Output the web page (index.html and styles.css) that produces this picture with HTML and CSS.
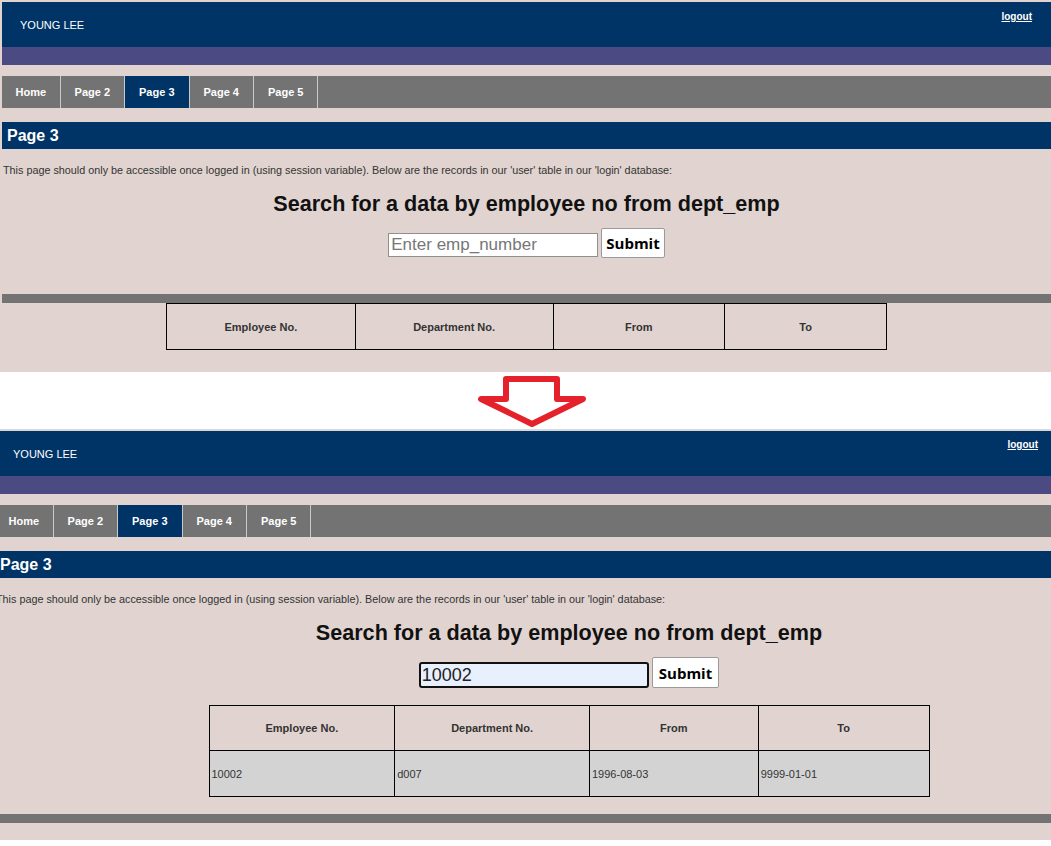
FILE: index.html
```html
<!DOCTYPE html>
<html lang="en">
<head>
<meta charset="utf-8">
<title>Page 3</title>
<link rel="stylesheet" href="styles.css">
</head>
<body>
<section class="shot shot-top">
  <div class="page">
    <header class="masthead">
      <span class="user">YOUNG LEE</span>
      <a class="logout" href="#">logout</a>
    </header>
    <div class="band"></div>
    <nav class="menu">
      <a href="#" class="menu-item">Home</a>
      <a href="#" class="menu-item">Page 2</a>
      <a href="#" class="menu-item active">Page 3</a>
      <a href="#" class="menu-item">Page 4</a>
      <a href="#" class="menu-item">Page 5</a>
    </nav>
    <h2 class="page-title">Page 3</h2>
    <p class="intro">This page should only be accessible once logged in (using session variable). Below are the records in our 'user' table in our 'login' database:</p>
    <div class="search">
      <h1 class="search-title">Search for a data by employee no from dept_emp</h1>
      <form class="search-form">
        <input class="search-input" type="text" placeholder="Enter emp_number">
        <button class="search-btn" type="button">Submit</button>
      </form>
    </div>
    <div class="rule"></div>
    <table class="records">
      <tr>
        <th class="c1">Employee No.</th>
        <th class="c2">Department No.</th>
        <th class="c3">From</th>
        <th class="c4">To</th>
      </tr>
    </table>
  </div>
</section>

<div class="divider">
  <svg class="arrow" width="114" height="56" viewBox="0 0 114 56" aria-hidden="true">
    <path d="M30 5 H81 V25 H107 L56 50 L5 25 H30 Z" fill="#ffffff" stroke="#e5222b" stroke-width="6" stroke-linejoin="round"/>
  </svg>
</div>

<section class="shot shot-bottom">
  <div class="page">
    <header class="masthead">
      <span class="user">YOUNG LEE</span>
      <a class="logout" href="#">logout</a>
    </header>
    <div class="band"></div>
    <nav class="menu">
      <a href="#" class="menu-item">Home</a>
      <a href="#" class="menu-item">Page 2</a>
      <a href="#" class="menu-item active">Page 3</a>
      <a href="#" class="menu-item">Page 4</a>
      <a href="#" class="menu-item">Page 5</a>
    </nav>
    <h2 class="page-title">Page 3</h2>
    <p class="intro">This page should only be accessible once logged in (using session variable). Below are the records in our 'user' table in our 'login' database:</p>
    <div class="shifted">
      <div class="search">
        <h1 class="search-title">Search for a data by employee no from dept_emp</h1>
        <form class="search-form">
          <input class="search-input focused" type="text" value="10002">
          <button class="search-btn" type="button">Submit</button>
        </form>
      </div>
      <table class="records">
        <tr>
          <th class="c1">Employee No.</th>
          <th class="c2">Department No.</th>
          <th class="c3">From</th>
          <th class="c4">To</th>
        </tr>
        <tr class="data">
          <td>10002</td>
          <td>d007</td>
          <td>1996-08-03</td>
          <td>9999-01-01</td>
        </tr>
      </table>
    </div>
    <div class="rule"></div>
  </div>
</section>
</body>
</html>
```

FILE: styles.css
```css
* { box-sizing: border-box; }

html, body {
  margin: 0;
  padding: 0;
  background: #ffffff;
  font-family: "Liberation Sans", Arial, sans-serif;
  overflow: hidden;
}

body { width: 1051px; height: 846px; }

.shot {
  background: #e1d4d0;
  overflow: hidden;
}

.shot-top {
  height: 372px;
  padding: 2px 0 0 2px;
}

.shot-bottom {
  height: 411px;
  border-top: 2px solid #d9d9d9;
}

.shot-bottom .page { margin-left: -5px; }

/* header */
.masthead {
  height: 45px;
  background: #003366;
  display: flex;
  align-items: center;
  color: #ffffff;
}

.user {
  font-size: 11px;
  padding-left: 18px;
}

.logout {
  align-self: flex-start;
  margin: 9px 19px 0 auto;
  color: #ffffff;
  font-size: 10px;
  font-weight: bold;
  text-decoration: underline;
}

.shot-bottom .logout { margin: 8px 13px 0 auto; }

.band {
  height: 18px;
  background: #4b4a82;
  margin-bottom: 11px;
}

/* menu */
.menu {
  display: flex;
  height: 32px;
  background: #737373;
  margin-bottom: 14px;
}

.menu-item {
  display: block;
  padding: 0 14px;
  line-height: 32px;
  color: #ffffff;
  font-size: 11px;
  font-weight: bold;
  text-decoration: none;
  border-right: 1px solid #c9c9c9;
}

.menu-item:first-child { padding: 0 13.5px; }

.menu-item.active { background: #003366; }

.page-title {
  margin: 0;
  height: 27px;
  line-height: 27px;
  background: #003366;
  color: #ffffff;
  font-size: 16px;
  font-weight: bold;
  padding-left: 5px;
}

.intro {
  margin: 15px 0 0;
  padding-left: 1px;
  font-size: 10.8px;
  line-height: 13px;
  color: #333333;
}

/* search */
.search {
  text-align: center;
  margin-top: 14px;
}

.search-title {
  margin: 0;
  font-size: 21.6px;
  line-height: 26px;
  font-weight: bold;
  color: #111111;
}

.search-form {
  margin: 11px 0 0;
  display: flex;
  justify-content: center;
  align-items: flex-end;
  gap: 3px;
}

.search-input {
  width: 210px;
  height: 24px;
  margin-bottom: 1px;
  border: 1px solid #8f8f8f;
  background: #ffffff;
  font-family: "Liberation Sans", Arial, sans-serif;
  font-size: 17px;
  padding: 0 2px;
  color: #222222;
}

.search-input::placeholder { color: #777777; }

.search-input.focused {
  width: 230px;
  height: 26px;
  margin-bottom: 0;
  border: 2px solid #111111;
  border-radius: 3px;
  background: #e8f0fe;
  font-size: 18px;
  padding: 0 1px;
}

.search-btn {
  height: 30px;
  padding: 0 4px;
  background: #ffffff;
  border: 1px solid #9a9a9a;
  border-radius: 2px;
  font-family: "Open Sans", sans-serif;
  font-size: 15px;
  font-weight: bold;
  color: #000000;
}

.shot-bottom .search-btn {
  height: 31px;
  padding: 0 6px;
}

.rule {
  height: 9px;
  background: #737373;
}

.shot-top .rule { margin-top: 36px; }

.shot-bottom .rule { margin-top: 17px; }

/* table */
.records {
  border-collapse: collapse;
  width: 721px;
  margin: 0 auto;
  font-size: 11px;
  color: #333333;
}

.records th,
.records td {
  border: 1px solid #000000;
  height: 46px;
  padding: 0;
}

.records th { font-weight: bold; text-align: center; }

.records td { text-align: left; padding-left: 2px; }

.c1 { width: 189px; }
.c2 { width: 198px; }
.c3 { width: 172px; }
.c4 { width: 162px; }

.records .data { background: #d3d3d3; }

.shifted { padding-left: 92px; }

.shifted .search { margin-top: 14px; }

.shifted .records { margin-top: 17px; }

.shifted .c1 { width: 186px; }
.shifted .c2 { width: 195px; }
.shifted .c3 { width: 169px; }
.shifted .c4 { width: 171px; }

.shifted .records th { height: 45px; }

/* divider */
.divider {
  height: 57px;
  padding: 2px 0 0 476px;
}

.arrow { display: block; }
```
